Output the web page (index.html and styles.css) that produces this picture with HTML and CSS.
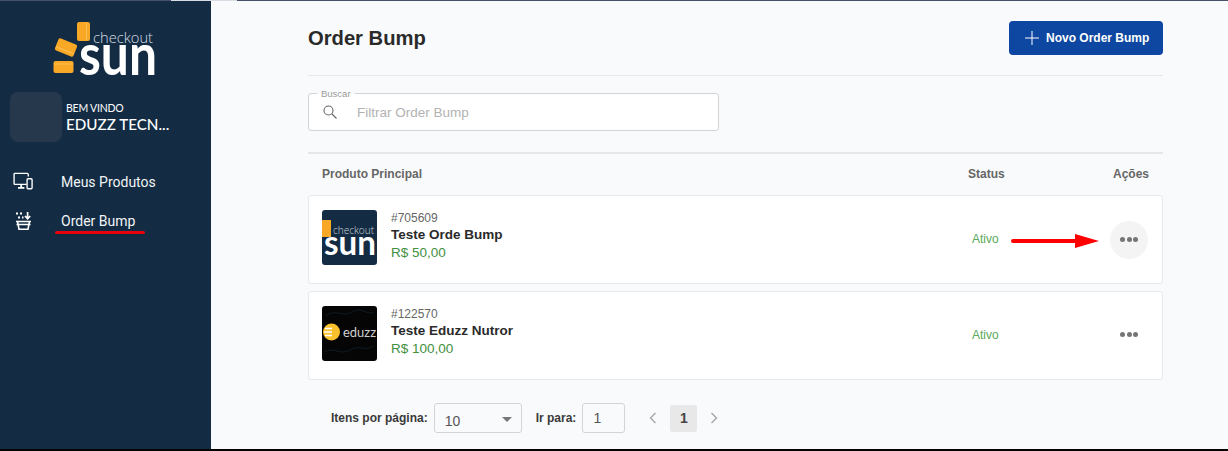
FILE: index.html
```html
<!DOCTYPE html>
<html lang="pt-BR">
<head>
    <meta charset="UTF-8">
    <meta name="viewport" content="width=device-width, initial-scale=1.0">
    <title>Order Bump</title>
    <link rel="stylesheet" href="styles.css">
</head>
<body>
    <div class="top-line"><span class="top-line-gap"></span></div>
    <div class="app">
        <aside class="sidebar">
            <div class="logo">
                <svg width="110" height="66" viewBox="0 0 110 66">
                    <rect x="25" y="1" width="13" height="19" rx="2" fill="#f9a825"/>
                    <path d="M34.500 2v17" stroke="#ffd27a" stroke-width="0.600"/>
                    <g transform="rotate(22 14 26.500)">
                        <rect x="4" y="20" width="20" height="13" rx="2" fill="#f9a825"/>
                        <path d="M4.500 29.500h19" stroke="#ffd27a" stroke-width="0.600"/>
                    </g>
                    <rect x="1.500" y="40" width="20" height="12" rx="2" fill="#f9a825"/>
                    <path d="M2 43h19" stroke="#ffd27a" stroke-width="0.600"/>
                    <text x="41" y="22" class="logo-small" textLength="60" lengthAdjust="spacingAndGlyphs">checkout</text>
                    <text x="27" y="54" class="logo-big" textLength="78" lengthAdjust="spacingAndGlyphs">sun</text>
                </svg>
            </div>
            <div class="user">
                <div class="avatar"></div>
                <div class="user-info">
                    <div class="welcome">BEM VINDO</div>
                    <div class="user-name">EDUZZ TECN...</div>
                </div>
            </div>
            <nav class="menu">
                <a class="menu-item">
                    <svg class="menu-icon" width="20" height="19" viewBox="0 0 22 20" fill="none" stroke="#fff" stroke-width="1.500">
                        <path d="M15 13.200H2.200a1 1 0 0 1-1-1V2a1 1 0 0 1 1-1h13.600a1 1 0 0 1 1 1v2.500"/>
                        <path d="M9 13.500v3M5.500 17h7" stroke-width="2"/>
                        <rect x="15.500" y="7" width="5.500" height="11" rx="1"/>
                    </svg>
                    <span>Meus Produtos</span>
                </a>
                <a class="menu-item">
                    <svg class="menu-icon" width="22" height="22" viewBox="0 0 22 22" fill="none" stroke="#fff" stroke-width="1.600">
                        <path d="M3 10.500h15M3.500 13.500h14M4.500 10.500 6 18.200h9l1.500-7.700"/>
                        <path d="M14.600 1v6M12 5l2.600 2.800L17.200 5" stroke-width="1.700"/>
                        <path d="M3 2.500h2M7 2.500h2M5 6.500h2M9 6.500h1.500" stroke-width="2"/>
                    </svg>
                    <span class="menu-current">Order Bump</span>
                </a>
            </nav>
        </aside>
        <main class="content">
            <header class="page-head">
                <h1>Order Bump</h1>
                <button class="btn-new">
                    <svg width="14" height="14" viewBox="0 0 14 14" stroke="#fff" stroke-width="1"><path d="M7 0v14M0 7h14"/></svg>
                    Novo Order Bump
                </button>
            </header>
            <div class="search">
                <span class="search-label">Buscar</span>
                <svg width="14" height="14" viewBox="0 0 14 14" fill="none" stroke="#666" stroke-width="1.100"><circle cx="5.500" cy="5.500" r="4.500"/><path d="M9 9l4.500 4.500"/></svg>
                <span class="search-text">Filtrar Order Bump</span>
            </div>
            <div class="table-head">
                <span class="col-main">Produto Principal</span>
                <span class="col-status">Status</span>
                <span class="col-actions">Ações</span>
            </div>
            <div class="row">
                <div class="thumb thumb-sun">
                    <svg width="55" height="55" viewBox="0 0 55 55">
                        <rect x="0" y="10" width="9" height="17" fill="#f9a825"/>
                        <text x="11" y="24" class="thumb-small" textLength="41" lengthAdjust="spacingAndGlyphs">checkout</text>
                        <text x="2" y="45" class="thumb-big" textLength="52" lengthAdjust="spacingAndGlyphs">sun</text>
                    </svg>
                </div>
                <div class="product">
                    <div class="product-id">#705609</div>
                    <div class="product-name">Teste Orde Bump</div>
                    <div class="product-price">R$ 50,00</div>
                </div>
                <div class="status">Ativo</div>
                <div class="actions"><button class="more more-on"><i></i><i></i><i></i></button></div>
                <svg class="arrow" width="88" height="16" viewBox="0 0 88 16"><path d="M2 8H66" stroke="#f00" stroke-width="4" stroke-linecap="round"/><path d="M64 1 88 8 64 15z" fill="#f00"/></svg>
            </div>
            <div class="row">
                <div class="thumb thumb-eduzz">
                    <svg width="55" height="55" viewBox="0 0 55 55">
                        <path d="M4 10c8-8 18 2 26-4s16 4 22 0M2 46c10-6 16 4 26-2s14 2 24-4" fill="none" stroke="#131c22" stroke-width="1"/>
                        <circle cx="9.500" cy="26" r="8.500" fill="#fbc02d"/>
                        <path d="M3 22.500h7M2 26h8M3 29.500h7" stroke="#fff" stroke-width="1.400"/>
                        <text x="21" y="31" class="thumb-eduzz-text" textLength="33" lengthAdjust="spacingAndGlyphs">eduzz</text>
                    </svg>
                </div>
                <div class="product">
                    <div class="product-id">#122570</div>
                    <div class="product-name">Teste Eduzz Nutror</div>
                    <div class="product-price">R$ 100,00</div>
                </div>
                <div class="status">Ativo</div>
                <div class="actions"><button class="more"><i></i><i></i><i></i></button></div>
            </div>
            <div class="pager">
                <span class="pager-label">Itens por página:</span>
                <div class="pager-select">10<span class="caret"></span></div>
                <span class="pager-label pager-go">Ir para:</span>
                <div class="pager-input">1</div>
                <svg class="chev" width="8" height="12" viewBox="0 0 8 12" fill="none" stroke="#aaa" stroke-width="1.500"><path d="M6.500 1 1.500 6l5 5"/></svg>
                <span class="page-current">1</span>
                <svg class="chev" width="8" height="12" viewBox="0 0 8 12" fill="none" stroke="#aaa" stroke-width="1.500"><path d="M1.500 1l5 5-5 5"/></svg>
            </div>
        </main>
    </div>
    <div class="bottom-line"></div>
</body>
</html>
```

FILE: styles.css
```css
html, body {
    margin: 0;
    padding: 0;
    height: 451px;
    overflow: hidden;
}
body {
    font-family: "Liberation Sans", Arial, sans-serif;
    background-color: #f9fafc;
    color: #2b2b2b;
    display: flex;
    flex-direction: column;
}
.top-line {
    height: 1px;
    flex: none;
    background-color: #46536a;
    padding-left: 171px;
}
.top-line-gap {
    display: block;
    width: 66px;
    height: 1px;
    background-color: #d9dde3;
}
.app {
    flex: 1;
    display: flex;
    min-height: 0;
}
.bottom-line {
    height: 2px;
    flex: none;
    background-color: #000;
}

/* menu lateral */
.sidebar {
    width: 211px;
    flex: none;
    background-color: #132c44;
    color: #fff;
}
.logo {
    display: flex;
    justify-content: center;
    padding: 20px 0 0 3px;
    height: 71px;
}
.logo svg {
    overflow: visible;
}
.logo-small {
    font-family: "Open Sans", sans-serif;
    font-size: 15px;
    font-weight: 300;
    fill: #d8dde2;
}
.logo-big {
    font-family: "Lato", sans-serif;
    font-size: 58px;
    font-weight: 700;
    fill: #fff;
}
.user {
    display: flex;
    align-items: center;
    gap: 4px;
    padding-left: 10px;
}
.avatar {
    width: 52px;
    height: 50px;
    background-color: #25384c;
    border-radius: 8px;
}
.user-info {
    font-family: "Lato", sans-serif;
}
.welcome {
    font-size: 10.500px;
    line-height: 13px;
    letter-spacing: -0.200px;
}
.user-name {
    font-size: 15.200px;
    line-height: 18px;
    font-weight: 500;
}
.menu {
    padding-top: 20px;
}
.menu-item {
    position: relative;
    display: flex;
    align-items: center;
    height: 39px;
    padding-left: 61px;
    font-family: "Roboto", sans-serif;
    font-size: 14px;
    color: #f2f4f6;
}
.menu-icon {
    position: absolute;
    left: 13px;
    top: 10px;
}
.menu-current {
    position: relative;
}
.menu-current::after {
    content: "";
    position: absolute;
    left: -6px;
    right: -10px;
    bottom: -5px;
    height: 3px;
    border-radius: 2px;
    background-color: #e8000d;
}

/* conteudo */
.content {
    flex: 1;
    min-width: 0;
    padding: 0 65px 0 97px;
}
.page-head {
    display: flex;
    justify-content: space-between;
    align-items: center;
    height: 74px;
    border-bottom: 1px solid #e6e8eb;
}
.page-head h1 {
    margin: 0;
    font-size: 20.200px;
    font-weight: 700;
    color: #2a2a2a;
}
.btn-new {
    display: flex;
    align-items: center;
    gap: 7px;
    width: 154px;
    height: 34px;
    padding: 0 0 0 16px;
    border: 0;
    border-radius: 4px;
    background-color: #0d47a1;
    color: #fff;
    font-family: inherit;
    font-size: 12px;
    font-weight: 700;
}
.search {
    position: relative;
    display: flex;
    align-items: center;
    box-sizing: border-box;
    width: 411px;
    height: 38px;
    margin-top: 17px;
    padding-left: 14px;
    background-color: #fff;
    border: 1px solid #d4d4d4;
    border-radius: 3px;
}
.search-label {
    position: absolute;
    left: 8px;
    top: -5px;
    padding: 0 4px;
    font-size: 9.500px;
    line-height: 10px;
    color: #9a9a9a;
    background: linear-gradient(#f9fafc 50%, #fff 50%);
}
.search-text {
    margin-left: 20px;
    font-size: 13.500px;
    color: #b2b2b2;
}
.table-head {
    display: flex;
    align-items: center;
    height: 39px;
    margin-top: 21px;
    border-top: 2px solid #e4e6e8;
    padding: 0 15px 2px 14px;
    font-size: 12px;
    font-weight: 700;
    color: #666;
}
.col-main {
    flex: 1;
}
.col-status {
    width: 145px;
}
.col-actions {
    width: 35px;
    text-align: right;
}
.row {
    position: relative;
    display: flex;
    align-items: center;
    height: 87px;
    margin-bottom: 7px;
    padding: 0 14px 0 13px;
    background-color: #fff;
    border: 1px solid #e8e9eb;
    border-radius: 3px;
}
.thumb {
    width: 55px;
    height: 55px;
    flex: none;
    margin-top: -5px;
    border-radius: 3px;
    overflow: hidden;
}
.thumb svg {
    display: block;
}
.thumb-sun {
    background-color: #132c44;
}
.thumb-eduzz {
    background-color: #050505;
}
.thumb-small {
    font-family: "Open Sans", sans-serif;
    font-size: 10px;
    font-weight: 300;
    fill: #cfd5da;
}
.thumb-big {
    font-family: "Lato", sans-serif;
    font-size: 35px;
    font-weight: 700;
    fill: #fff;
}
.thumb-eduzz-text {
    font-family: "Lato", sans-serif;
    font-size: 14px;
    fill: #d0d0d0;
}
.product {
    flex: 1;
    margin-left: 14px;
    margin-top: -8px;
}
.product-id {
    font-size: 12px;
    line-height: 14px;
    color: #666;
}
.product-name {
    font-size: 13.500px;
    font-weight: 700;
    line-height: 19px;
    color: #2a2a2a;
}
.product-price {
    font-size: 13.500px;
    line-height: 17px;
    color: #43903f;
}
.status {
    width: 138px;
    font-size: 12px;
    color: #5aa85a;
    margin-top: -2px;
}
.actions {
    width: 38px;
}
.more {
    display: flex;
    align-items: center;
    justify-content: center;
    gap: 1.500px;
    width: 38px;
    height: 38px;
    padding: 0;
    border: 0;
    border-radius: 50%;
    background: none;
    margin-top: -2px;
}
.more-on {
    background-color: #f4f4f4;
    margin-top: 0;
}
.more i {
    width: 5px;
    height: 5px;
    border-radius: 50%;
    background-color: #757575;
}
.arrow {
    position: absolute;
    left: 702px;
    top: 37px;
}
.pager {
    display: flex;
    align-items: center;
    margin-top: 23px;
    padding-left: 23px;
    font-size: 12px;
}
.pager-label {
    font-weight: 700;
    color: #3a3a3a;
}
.pager-select {
    position: relative;
    width: 88px;
    height: 30px;
    margin-left: 6px;
    padding: 9px 0 0 10px;
    box-sizing: border-box;
    border: 1px solid #d4d4d4;
    border-radius: 3px;
    font-size: 14px;
    color: #555;
}
.caret {
    position: absolute;
    right: 9px;
    top: 13px;
    border-left: 5px solid transparent;
    border-right: 5px solid transparent;
    border-top: 5px solid #777;
}
.pager-go {
    margin-left: 14px;
}
.pager-input {
    width: 43px;
    height: 30px;
    margin-left: 6px;
    padding: 6px 0 0 10px;
    box-sizing: border-box;
    border: 1px solid #d4d4d4;
    border-radius: 3px;
    font-size: 14px;
    color: #555;
}
.chev {
    margin-left: 24px;
}
.page-current {
    width: 27px;
    height: 27px;
    margin-left: 13px;
    line-height: 27px;
    text-align: center;
    background-color: #e8e8e8;
    border-radius: 2px;
    font-weight: 700;
    font-size: 14px;
    color: #444;
}
.page-current + .chev {
    margin-left: 13px;
}
```
